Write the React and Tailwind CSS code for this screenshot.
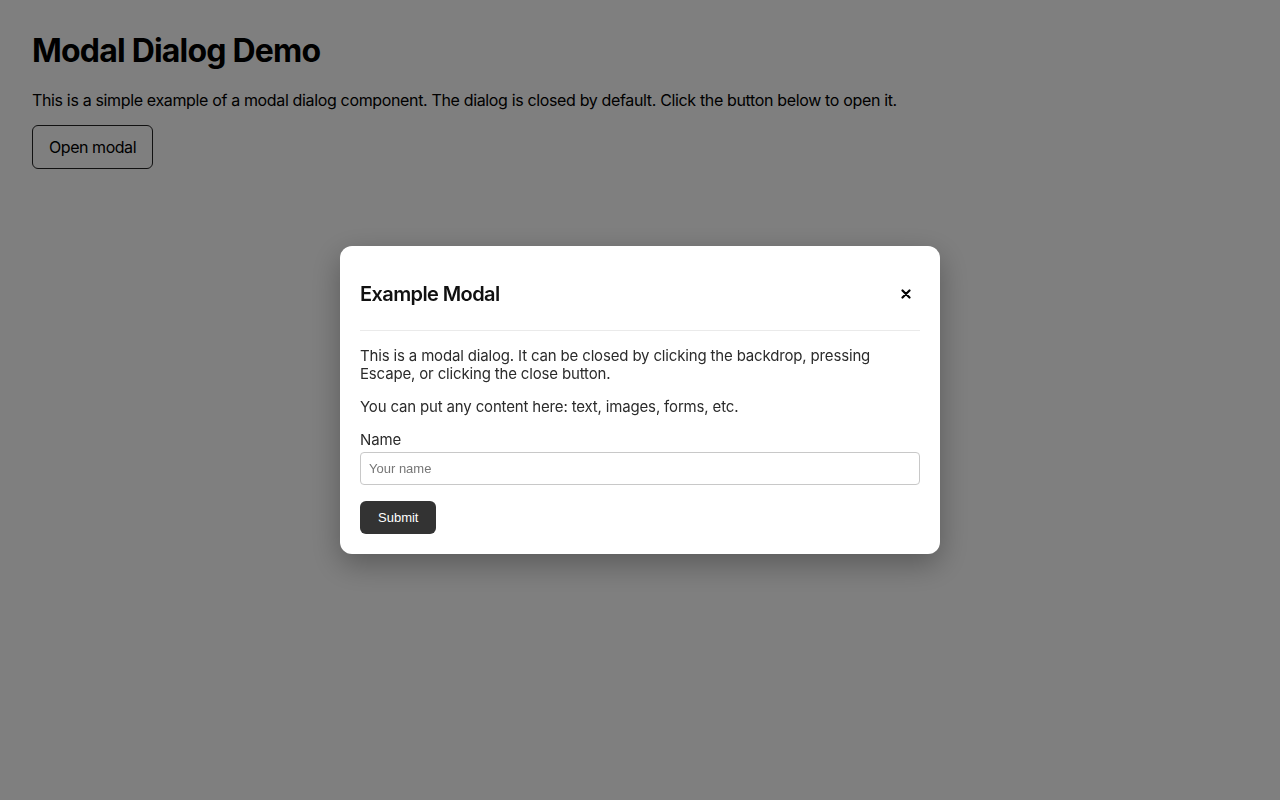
export default function App() {
  return (
    <div className="min-h-screen bg-white p-8 text-black" style={{ fontFamily: "Inter, 'Noto Sans', sans-serif" }}>
      {/* PAGE */}
      <h1 className="text-[32px] font-bold leading-[38px] tracking-[-0.8px]">Modal Dialog Demo</h1>
      <p className="mt-[18px] text-[16px] leading-6 tracking-[-0.35px]">
        This is a simple example of a modal dialog component. The dialog is closed by default. Click the button below to open it.
      </p>
      <button className="mt-[13px] rounded-md border border-[#222] bg-white px-4 py-[9px] text-[16px] leading-6 tracking-[-0.45px] text-black">
        Open modal
      </button>

      {/* BACKDROP + MODAL */}
      <div className="fixed inset-0 flex items-center justify-center bg-black/50">
        <div className="w-[600px] rounded-xl bg-white px-5 pb-5 pt-8 text-[#2b2b2b] shadow-[0_10px_30px_rgba(0,0,0,0.3)]">
          <div className="flex items-center justify-between border-b border-[#eaeaea] pb-5">
            <h2 className="text-[20px] font-semibold leading-8 tracking-[-0.6px] text-[#111]">Example Modal</h2>
            <button className="flex h-8 w-7 items-center justify-center text-black" aria-label="Close">
              <svg width="10" height="10" viewBox="0 0 10 10" fill="none" stroke="currentColor" strokeWidth="2.2" strokeLinecap="round">
                <path d="M1.5 1.5L8.5 8.5M8.5 1.5L1.5 8.5" />
              </svg>
            </button>
          </div>
          <div className="pt-4 text-[15px] leading-[18px] tracking-[-0.16px]">
            <p>This is a modal dialog. It can be closed by clicking the backdrop, pressing Escape, or clicking the close button.</p>
            <p className="mt-[15px]">You can put any content here: text, images, forms, etc.</p>
            <label className="mt-[15px] block">Name</label>
            <input
              className="mt-[3px] block h-[33px] w-full rounded border border-[#c8c8c8] px-2 text-[13px] tracking-normal placeholder:text-[#777] outline-none"
              style={{ fontFamily: "'Liberation Sans', Arial, sans-serif" }}
              placeholder="Your name"
            />
            <button
              className="mt-4 h-[33px] rounded-md bg-[#333] px-[18px] text-[13px] tracking-normal text-white"
              style={{ fontFamily: "'Liberation Sans', Arial, sans-serif" }}
            >
              Submit
            </button>
          </div>
        </div>
      </div>
    </div>
  );
}
